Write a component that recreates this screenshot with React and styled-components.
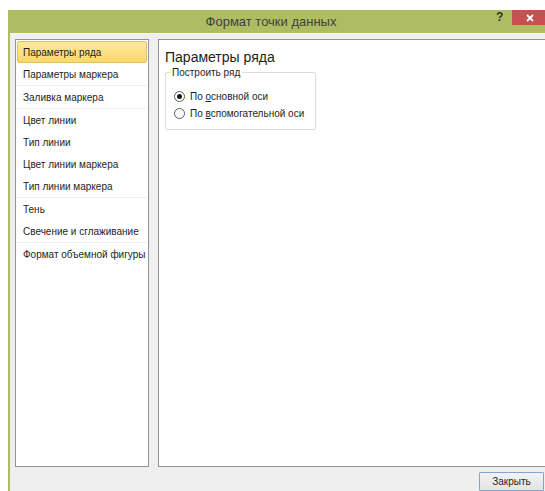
import React, { useState } from "react";
import styled, { createGlobalStyle } from "styled-components";

const GlobalStyle = createGlobalStyle`
  html, body {
    margin: 0;
    padding: 0;
    background: #ffffff;
    overflow: hidden;
  }
  body {
    font-family: "Liberation Sans", "Noto Sans", sans-serif;
  }
`;

const Page = styled.div`
  width: 545px;
  height: 491px;
  padding: 10px 0 0 8px;
  box-sizing: border-box;
  overflow: hidden;
`;

const Window = styled.div`
  width: 560px;
  height: 481px;
  display: flex;
  flex-direction: column;
  background: #afbd62;
  padding-left: 2px;
  box-sizing: border-box;
`;

const TitleBar = styled.div`
  height: 23px;
  flex: none;
  position: relative;
`;

const Title = styled.div`
  position: absolute;
  left: 0;
  width: 522px;
  top: 4px;
  text-align: center;
  font-size: 13px;
  color: #3f3f3f;
`;

const Help = styled.div`
  position: absolute;
  left: 486px;
  top: 0;
  font-size: 12px;
  font-weight: bold;
  color: #333;
`;

const CloseBox = styled.div`
  position: absolute;
  left: 502px;
  top: 0;
  width: 48px;
  height: 15px;
  background: #c75050;
  display: flex;
  align-items: center;
  padding-left: 14px;
  box-sizing: border-box;
`;

const Body = styled.div`
  flex: 1;
  background: #efefef;
  border-top: 1px solid #f7f7f7;
  display: flex;
  flex-direction: column;
  padding: 5px 0 0 5px;
`;

const Panels = styled.div`
  display: flex;
  gap: 9px;
  height: 428px;
`;

const Nav = styled.div`
  width: 134px;
  box-sizing: border-box;
  background: #ffffff;
  border: 1px solid #8e939c;
  padding: 1px;
  display: flex;
  flex-direction: column;
`;

const Group = styled.div`
  display: flex;
  flex-direction: column;
  border-bottom: ${({ $last }) => ($last ? "none" : "1px solid #eeeff2")};
`;

const NavItem = styled.div`
  height: 22px;
  box-sizing: border-box;
  display: flex;
  align-items: center;
  padding-left: 5px;
  font-size: 10px;
  white-space: nowrap;
  color: #1e1e1e;
  border: 1px solid transparent;
  border-radius: 2px;
  ${({ $active }) =>
    $active &&
    `
    background: linear-gradient(#fee9a0, #fdd86a);
    border-color: #e3c063;
  `}
`;

const Content = styled.div`
  flex: 1;
  background: #ffffff;
  border: 1px solid #8e939c;
  border-right: none;
  padding: 9px 0 0 6px;
`;

const Heading = styled.div`
  font-size: 14px;
  color: #1e1e1e;
  margin-bottom: 2px;
`;

const Fieldset = styled.fieldset`
  width: 151px;
  box-sizing: border-box;
  margin: 0;
  padding: 12px 0 9px 8px;
  border: 1px solid #dcdcdc;
  border-radius: 2px;
  display: flex;
  flex-direction: column;
  gap: 4px;
`;

const Legend = styled.legend`
  font-size: 10px;
  color: #1e1e1e;
  padding: 0 2px;
  margin-left: -4px;
`;

const RadioRow = styled.label`
  display: flex;
  align-items: center;
  gap: 5px;
  font-size: 10px;
  white-space: nowrap;
  color: #1e1e1e;
  height: 13px;
`;

const RadioDot = styled.span`
  width: 11px;
  height: 11px;
  flex: none;
  box-sizing: border-box;
  border-radius: 50%;
  border: 1px solid #5a5a5a;
  background: #ffffff;
  display: flex;
  align-items: center;
  justify-content: center;
  &::after {
    content: "";
    width: 5px;
    height: 5px;
    border-radius: 50%;
    background: ${({ $on }) => ($on ? "#1a1a1a" : "transparent")};
  }
`;

const Footer = styled.div`
  flex: 1;
  display: flex;
  justify-content: flex-end;
  align-items: flex-start;
  padding-top: 5px;
  padding-right: 24px;
`;

const Button = styled.button`
  width: 65px;
  height: 19px;
  box-sizing: border-box;
  border: 1px solid #7ea4cf;
  border-radius: 1px;
  background: linear-gradient(#f3f3f3, #e3e3e3);
  font-family: inherit;
  font-size: 10px;
  color: #1e1e1e;
  padding: 0;
`;

const groups = [
  ["Параметры ряда", "Параметры маркера"],
  ["Заливка маркера"],
  ["Цвет линии", "Тип линии", "Цвет линии маркера", "Тип линии маркера"],
  ["Тень", "Свечение и сглаживание"],
  ["Формат объемной фигуры"],
];

export default function App() {
  const [active, setActive] = useState("Параметры ряда");
  const [axis, setAxis] = useState("main");

  return (
    <Page>
      <GlobalStyle />
      <Window>
        <TitleBar>
          <Title>Формат точки данных</Title>
          <Help>?</Help>
          <CloseBox>
            <svg width="8" height="8" viewBox="0 0 8 8">
              <path d="M1 1 L7 7 M7 1 L1 7" stroke="#ffffff" strokeWidth="1.8" />
            </svg>
          </CloseBox>
        </TitleBar>
        <Body>
          <Panels>
            <Nav>
              {groups.map((g, i) => (
                <Group key={i} $last={i === groups.length - 1}>
                  {g.map((name) => (
                    <NavItem key={name} $active={name === active} onClick={() => setActive(name)}>
                      {name}
                    </NavItem>
                  ))}
                </Group>
              ))}
            </Nav>
            <Content>
              <Heading>Параметры ряда</Heading>
              <Fieldset>
                <Legend>Построить ряд</Legend>
                <RadioRow onClick={() => setAxis("main")}>
                  <RadioDot $on={axis === "main"} />
                  <span>
                    По <u>о</u>сновной оси
                  </span>
                </RadioRow>
                <RadioRow onClick={() => setAxis("second")}>
                  <RadioDot $on={axis === "second"} />
                  <span>
                    По <u>в</u>спомогательной оси
                  </span>
                </RadioRow>
              </Fieldset>
            </Content>
          </Panels>
          <Footer>
            <Button>Закрыть</Button>
          </Footer>
        </Body>
      </Window>
    </Page>
  );
}
